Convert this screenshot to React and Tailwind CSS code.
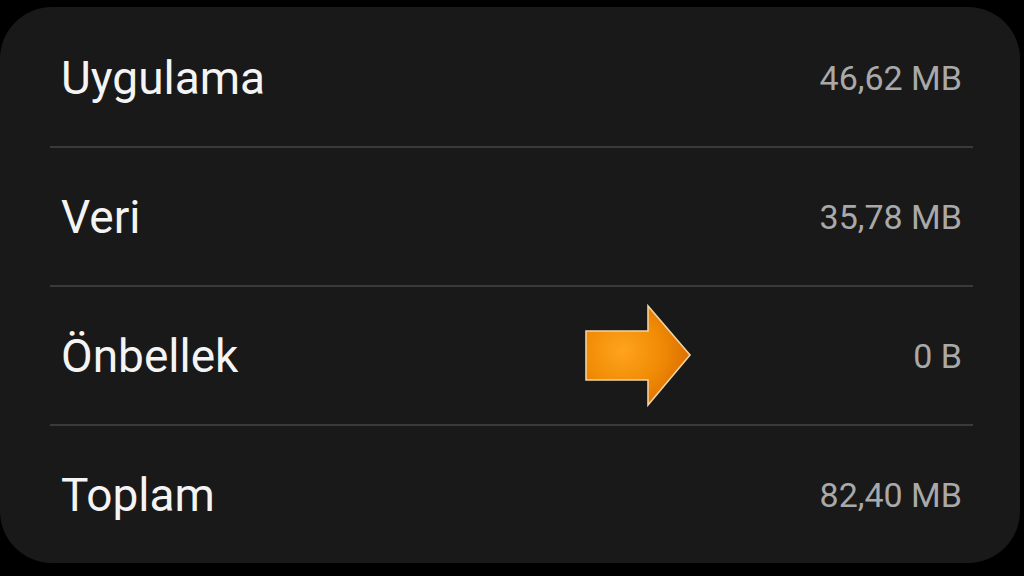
const rows = [
    { label: "Uygulama", value: "46,62 MB" },
    { label: "Veri", value: "35,78 MB" },
    { label: "Önbellek", value: "0 B", arrow: true },
    { label: "Toplam", value: "82,40 MB" },
];

const OrangeArrow = () => (
    <svg width="110" height="106" viewBox="0 0 110 106" className="absolute left-[533px] top-[16px]">
        <defs>
            <radialGradient id="arrowFill" cx="0.35" cy="0.45" r="0.7">
                <stop offset="0" stopColor="#ffa41c" />
                <stop offset="0.55" stopColor="#f08a05" />
                <stop offset="1" stopColor="#d86a00" />
            </radialGradient>
        </defs>
        <path
            d="M3 28 L65 28 L65 3 L107 52 L65 102 L65 77 L3 77 Z"
            fill="url(#arrowFill)"
            stroke="#f2d3a2"
            strokeWidth="1.6"
            strokeLinejoin="miter"
        />
    </svg>
);

const StorageRow = ({ label, value, arrow, last }) => (
    <div
        className={`relative ml-[50px] mr-[47px] h-[137px] flex items-center justify-between pl-[11px] pr-[11px] ${
            last ? "" : "border-b-2 border-[#3a3a3a]"
        } box-content`}
    >
        <span className="text-[46px] text-[#f4f4f4] leading-none">{label}</span>
        {arrow && <OrangeArrow />}
        <span className="text-[34px] text-[#a9a9a9] leading-none">{value}</span>
    </div>
);

export default function App() {
    return (
        <div className="w-[1024px] h-[576px] bg-black overflow-hidden font-['Roboto','Liberation_Sans',sans-serif]">
            {/* Card */}
            <div className="mt-[7px] w-[1020px] h-[556px] bg-[#191919] rounded-[52px] pt-[2px]">
                {rows.map((row, i) => (
                    <StorageRow key={row.label} {...row} last={i === rows.length - 1} />
                ))}
            </div>
        </div>
    );
}
